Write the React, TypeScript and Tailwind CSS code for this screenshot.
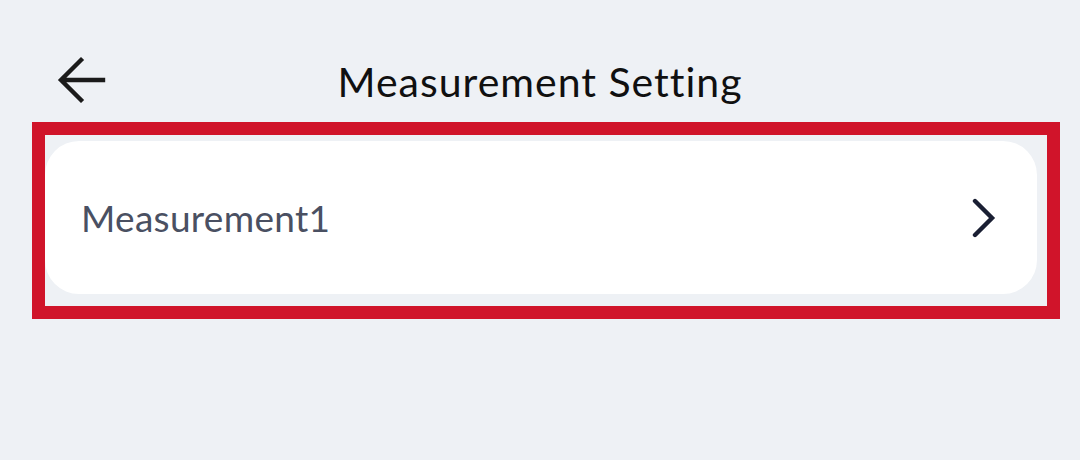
export default function App() {
  return (
    <div className="h-[460px] w-[1080px] bg-[#eef1f5] font-['Lato',sans-serif]">
      <div className="grid h-[122px] grid-cols-[1fr_auto_1fr] items-start">
        <div className="pl-[56px] pt-[56px]">
          <button
            type="button"
            aria-label="Back"
            className="flex h-[48px] w-[52px] items-center justify-start text-[#1b1b1b]"
          >
            <svg width="52" height="48" viewBox="0 0 52 48" fill="none">
              <path
                d="M47 24H7M25 4L5 24L25 44"
                stroke="currentColor"
                strokeWidth="4.4"
                strokeLinecap="square"
                strokeLinejoin="miter"
              />
            </svg>
          </button>
        </div>
        <h1 className="pt-[61px] text-[41px] leading-none tracking-[1px] text-[#101010]">
          Measurement Setting
        </h1>
        <div />
      </div>

      <div className="ml-[32px] w-[1028px] border-[13px] border-[#d0142a] pb-[12px] pr-[10px] pt-[6px]">
        <div className="flex h-[153px] items-center justify-between rounded-[34px] bg-white pl-[36px] pr-[40px]">
          <span className="text-[37px] tracking-[0.3px] text-[#4a5062]">Measurement1</span>
          <svg width="26" height="40" viewBox="0 0 26 40" fill="none" className="text-[#1a1f33]">
            <path
              d="M4 3L21 20L4 37"
              stroke="currentColor"
              strokeWidth="4.4"
              strokeLinecap="round"
              strokeLinejoin="miter"
            />
          </svg>
        </div>
      </div>
    </div>
  );
}
